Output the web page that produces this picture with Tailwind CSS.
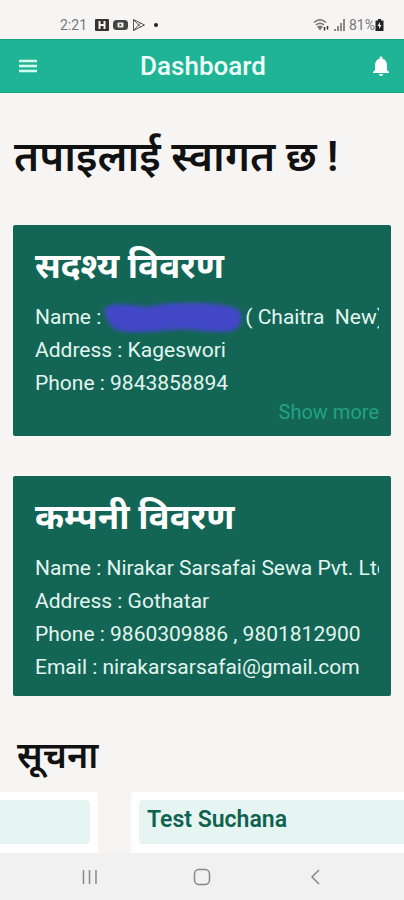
<!DOCTYPE html>
<html lang="ne">
<head>
<meta charset="utf-8">
<meta name="viewport" content="width=device-width, initial-scale=1">
<title>Dashboard</title>
<script src="https://cdn.jsdelivr.net/npm/@tailwindcss/browser@4"></script>
</head>
<body class="flex h-screen flex-col overflow-hidden bg-[#f7f5f4] font-['Roboto','Noto_Sans',sans-serif] text-[#111]">
  <div class="flex h-[39px] shrink-0 items-end justify-between pr-5 pb-1 pl-[60px] text-sm text-[#777]">
    <div class="flex items-center gap-1">
      <span>2:21</span>
      <svg class="ml-1 h-3 w-[14px]" viewBox="0 0 14 12"><rect width="14" height="12" rx="1" fill="#333"/><path d="M4.500 2v8M9.500 2v8M4 6h6" stroke="#f7f5f4" stroke-width="2"/></svg>
      <svg class="h-3 w-[15px]" viewBox="0 0 15 12"><rect y="1" width="15" height="10" rx="3.500" fill="#444"/><rect x="4.500" y="3.500" width="6" height="5" rx="1" fill="#eee"/><path d="M6.500 4.500l2.500 1.500-2.500 1.500z" fill="#444"/></svg>
      <svg class="h-[14px] w-[14px]" viewBox="0 0 14 14" fill="none" stroke="#555"><path d="M1.500 1.500l11 5.500-11 5.500zM1.500 1.500l7 7.500M1.500 12.500l7-7.500"/></svg>
      <span class="ml-1 size-1 rounded-full bg-[#222]"></span>
    </div>
    <div class="flex items-center">
      <svg class="h-[14px] w-[17px]" viewBox="0 0 17 14" fill="none" stroke="#777" stroke-width="1.500"><path d="M1 4.500q6-5.500 12 0M3 7q4-3.500 8 0M5 9q2-1.500 4 0"/><path d="M7 12.500l-3-4h6z" fill="#777" stroke="none"/><path d="M11.500 9v3.500M14.500 8v3.500" stroke="#333"/></svg>
      <svg class="mx-1 h-3 w-[11px]" viewBox="0 0 11 12" fill="#888"><path d="M0 10h2v2H0zM3 7h2v5H3zM6 4h2v8H6zM9 0h2v12H9z"/></svg>
      <span>81%</span>
      <svg class="h-3 w-[9px]" viewBox="0 0 9 12"><path d="M3 0h3v1.500h2.500V12h-8V1.500H3z" fill="#222"/><path d="M5 3L2.500 7H4v3l2.500-4H5z" fill="#eee"/></svg>
    </div>
  </div>

  <header class="flex h-[54px] shrink-0 items-center justify-between border-y border-[#15a583] bg-[#1fb495] pr-[14px] pl-[18px] text-white">
    <button type="button" aria-label="Menu"><svg class="h-5 w-5" viewBox="0 0 20 20" stroke="#d5faf0" stroke-width="2.500"><path d="M1 5h18M1 10h18M1 15h18"/></svg></button>
    <h1 class="pr-1 text-[26px] leading-8 font-medium text-[#effffa]">Dashboard</h1>
    <button type="button" aria-label="Notifications"><svg class="h-5 w-[18px]" viewBox="4 2 16 20" fill="#fff"><path d="M12 22c1.100 0 2-.9 2-2h-4c0 1.100.9 2 2 2zm6-6v-5c0-3.070-1.640-5.640-4.500-6.320V4c0-.83-.67-1.500-1.500-1.500s-1.500.67-1.500 1.500v.68C7.630 5.360 6 7.920 6 11v5l-2 2v1h16v-1l-2-2z"/></svg></button>
  </header>

  <main class="min-h-0 flex-1 overflow-hidden pt-[34px]">
    <h2 class="px-[14px] text-[42px] leading-[60px] font-semibold">तपाइलाई स्वागत छ !</h2>

    <section class="mx-[13px] mt-[38px] rounded-xs bg-[#136655] pt-[18px] pr-3 pb-3 pl-[22px] text-[#e2f5ef]">
      <h3 class="text-[35px] leading-[48px] font-bold text-white">सदश्य विवरण</h3>
      <div class="mt-[10px] text-[21px] leading-[33px]">
        <p class="flex items-center overflow-hidden whitespace-pre"><span>Name :</span><svg class="h-[33px] w-[144px] shrink-0" viewBox="0 0 144 33" role="img" aria-label="Hidden name"><defs><filter id="soft" x="-5%" y="-20%" width="110%" height="140%"><feGaussianBlur stdDeviation="2"/></filter></defs><path filter="url(#soft)" d="M3 9C8 1 22 3 46 6C64 1 84 2 104 2C118 4 138 4 140 13C142 21 138 30 126 31C106 32 90 27 72 29C52 30 32 34 16 29C8 25 6 18 3 9Z" fill="#4346c8"/></svg><span>( Chaitra  New)</span></p>
        <p>Address : Kageswori</p>
        <p>Phone : 9843858894</p>
      </div>
      <div class="flex justify-end"><a href="#" class="text-xl leading-6 text-[#22a283]">Show more</a></div>
    </section>

    <section class="mx-[13px] mt-10 rounded-xs bg-[#136655] pt-[18px] pr-3 pb-3 pl-[22px] text-[#e2f5ef]">
      <h3 class="text-[35px] leading-[48px] font-bold text-white">कम्पनी विवरण</h3>
      <div class="mt-[10px] text-[21px] leading-[33px]">
        <p class="overflow-hidden whitespace-nowrap">Name : Nirakar Sarsafai Sewa Pvt. Ltd</p>
        <p>Address : Gothatar</p>
        <p>Phone : 9860309886 , 9801812900</p>
        <p>Email : nirakarsarsafai@gmail.com</p>
      </div>
    </section>

    <h2 class="mt-9 px-[17px] text-[36px] leading-[48px] font-semibold">सूचना</h2>
    <div class="mt-3 flex gap-[33px] overflow-hidden">
      <article class="h-24 w-[98px] shrink-0 rounded-r-sm bg-white py-2 pr-2"><div class="h-11 rounded-r-sm bg-[#e6f5f1]"></div></article>
      <article class="h-24 flex-1 rounded-l-sm bg-white py-2 pl-2"><h3 class="h-11 rounded-l-sm bg-[#e6f5f1] px-2 text-[23px] leading-[40px] font-semibold text-[#0e6350]">Test Suchana</h3></article>
    </div>
  </main>

  <nav class="flex h-[47px] shrink-0 items-center justify-between bg-[#f1f1f1] px-[80px] text-[#888]">
    <button type="button" aria-label="Recent apps"><svg class="h-5 w-5" viewBox="0 0 20 20" stroke="currentColor" stroke-width="1.500"><path d="M3.500 3v14M9.500 3v14M16 3v14"/></svg></button>
    <button type="button" aria-label="Home"><svg class="h-5 w-5" viewBox="0 0 20 20" fill="none" stroke="currentColor" stroke-width="1.500"><rect x="2.500" y="2.500" width="15" height="15" rx="4.500"/></svg></button>
    <button type="button" aria-label="Back"><svg class="h-5 w-5" viewBox="0 0 20 20" fill="none" stroke="currentColor" stroke-width="1.500"><path d="M15 3L8 10l7 7"/></svg></button>
  </nav>
</body>
</html>
